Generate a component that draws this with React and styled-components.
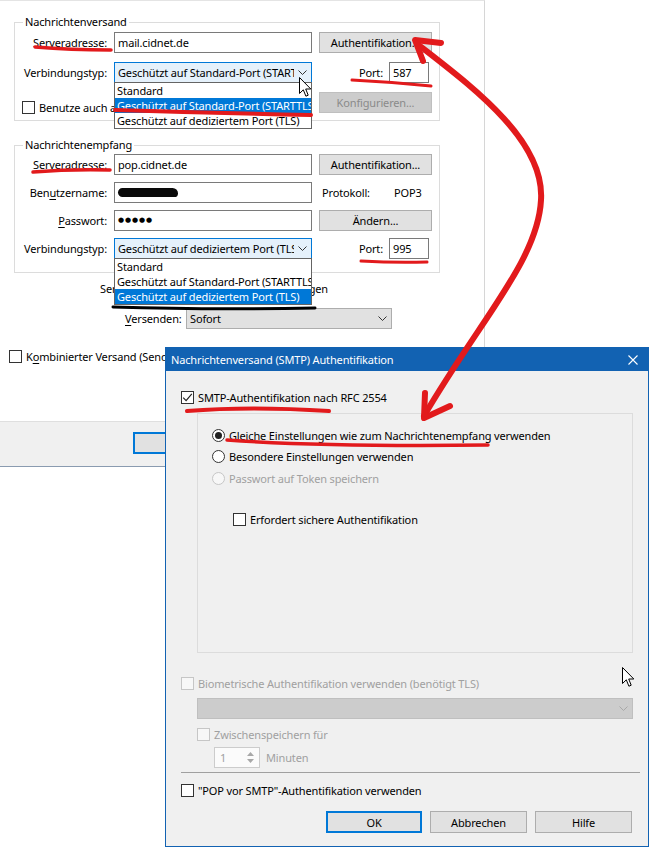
import React from "react";
import styled, { createGlobalStyle, css } from "styled-components";

const UI_FONT = `"Noto Sans", "Open Sans", "DejaVu Sans", sans-serif`;
const FS = 11;
const LS = "-0.15px";
const RED = "#e21a1c";
const ACCENT = "#0078d7";
const TITLE_BLUE = "#1262b2";
const GREY_TEXT = "#a0a0a0";

const GlobalStyle = createGlobalStyle`
  *, *::before, *::after { box-sizing: border-box; }
  html, body { margin: 0; padding: 0; background: #ffffff; }
  body { font-family: ${UI_FONT}; font-size: ${FS}px; letter-spacing: ${LS}; color: #000; }
`;

const Desktop = styled.main`
  position: relative;
  width: 650px;
  height: 850px;
  overflow: hidden;
  background: #ffffff;
`;

/* ---------------- shared controls ---------------- */
const TextBox = styled.div`
  align-self: center;
  height: 21px;
  display: flex;
  align-items: center;
  padding: 0 3px;
  background: #fff;
  border: 1px solid #7a7a7a;
  white-space: nowrap;
  overflow: hidden;
  ${(p) => p.$w && css`width: ${p.$w}px; flex: none;`}
`;

const WinButton = styled.button`
  align-self: end;
  font-family: inherit;
  font-size: inherit;
  letter-spacing: inherit;
  color: #000;
  height: ${(p) => p.$h || 21}px;
  width: ${(p) => (p.$w ? `${p.$w}px` : "100%")};
  flex: none;
  padding: 0 4px;
  background: #e1e1e1;
  border: 1px solid #adadad;
  border-radius: 0;
  white-space: nowrap;
  overflow: hidden;
  ${(p) => p.$disabled && css`background: #cccccc; border-color: #bfbfbf; color: #8a8a8a;`}
  ${(p) => p.$default && css`border: 2px solid ${ACCENT};`}
`;

const Combo = styled.div`
  position: relative;
  align-self: center;
  height: 21px;
  display: flex;
  align-items: center;
  padding-left: 3px;
  border: 1px solid #adadad;
  background: #e1e1e1;
  color: #000;
  ${(p) => p.$w && css`width: ${p.$w}px; flex: none;`}
  ${(p) => p.$open && css`border-color: ${ACCENT}; background: #e5f1fb;`}
  ${(p) => p.$disabled && css`background: #cccccc; border-color: #bfbfbf; color: #9a9a9a;`}
`;

const ComboValue = styled.span`
  flex: 1;
  min-width: 0;
  overflow: hidden;
  white-space: nowrap;
`;

const ComboArrow = styled.span`
  width: 17px;
  flex: none;
  display: flex;
  align-items: center;
  justify-content: center;
  color: ${(p) => (p.$disabled ? "#a8a8a8" : "#333")};
`;

const DropList = styled.ul`
  position: absolute;
  z-index: 20;
  top: 100%;
  left: -1px;
  right: -1px;
  margin: 0;
  padding: 0;
  list-style: none;
  background: #fff;
  border: 1px solid #646464;
`;

const DropItem = styled.li`
  height: 15px;
  line-height: 15px;
  padding-left: 2px;
  white-space: nowrap;
  overflow: hidden;
  ${(p) => p.$active && css`background: ${ACCENT}; color: #fff;`}
`;

const Chevron = () => (
  <svg width="9" height="5" viewBox="0 0 9 5">
    <path d="M0.5 0.5 L4.5 4.5 L8.5 0.5" fill="none" stroke="currentColor" strokeWidth="1" />
  </svg>
);

const CheckBox = styled.span`
  width: 13px;
  height: 13px;
  flex: none;
  display: inline-flex;
  align-items: center;
  justify-content: center;
  background: #fff;
  border: 1px solid #333;
  ${(p) => p.$disabled && css`background: #f7f7f7; border-color: #c6c6c6;`}
`;

const Check = ({ checked, disabled }) => (
  <CheckBox $disabled={disabled}>
    {checked && (
      <svg width="11" height="11" viewBox="0 0 11 11">
        <path d="M1.2 5.6 L4.1 8.6 L9.8 1.8" fill="none" stroke="#222" strokeWidth="1.2" />
      </svg>
    )}
  </CheckBox>
);

const RadioCircle = styled.span`
  width: 13px;
  height: 13px;
  flex: none;
  border-radius: 50%;
  display: inline-flex;
  align-items: center;
  justify-content: center;
  background: #fff;
  border: 1px solid #333;
  ${(p) => p.$disabled && css`background: #f7f7f7; border-color: #c6c6c6;`}
`;

const RadioDot = styled.span`
  width: 7px;
  height: 7px;
  border-radius: 50%;
  background: #222;
`;

const Radio = ({ checked, disabled }) => (
  <RadioCircle $disabled={disabled}>{checked && <RadioDot />}</RadioCircle>
);

const OptionRow = styled.div`
  display: flex;
  align-items: center;
  gap: 4px;
  height: 16px;
  white-space: nowrap;
  margin: ${(p) => p.$mt || 0}px 0 0 ${(p) => p.$ml || 0}px;
  color: ${(p) => (p.$disabled ? GREY_TEXT : "#000")};
`;

const Key = styled.u`
  text-decoration-thickness: 1px;
  text-underline-offset: 2px;
`;

/* ---------------- back window ---------------- */
const BackWindow = styled.section`
  position: absolute;
  left: 0;
  top: 0;
  width: 485px;
  height: 467px;
  display: flex;
  flex-direction: column;
  background: #fff;
  border-top: 1px solid #e4e4e4;
  border-right: 1px solid #d6d6d6;
  border-bottom: 1px solid #8a9bb0;
`;

const BackContent = styled.div`
  flex: 1;
  display: flex;
  flex-direction: column;
  padding-top: 13px;
`;

const BackFooter = styled.div`
  height: 45px;
  flex: none;
  background: #f0f0f0;
  border-top: 1px solid #dfdfdf;
  padding: 10px 0 0 133px;
`;

const Group = styled.fieldset`
  margin: ${(p) => p.$mt || 0}px 0 0 14px;
  width: 426px;
  min-width: 0;
  padding: ${(p) => p.$pt}px 7px ${(p) => p.$pb}px 8px;
  border: 1px solid #dcdcdc;
`;

const Legend = styled.legend`
  padding: 0 2px;
  height: 16px;
  line-height: 16px;
`;

const FormGrid = styled.div`
  display: grid;
  grid-template-columns: 84px 198px 113px;
  grid-auto-rows: 22px;
  column-gap: 7px;
  row-gap: ${(p) => p.$rowGap}px;
`;

const FieldLabel = styled.span`
  align-self: center;
  text-align: right;
  white-space: nowrap;
`;

const PortCell = styled.div`
  display: flex;
  align-items: center;
  justify-content: flex-end;
  gap: 6px;
  padding-right: 3px;
`;

const ProtoCell = styled.div`
  display: flex;
  align-items: center;
  padding-left: 3px;
`;

const ProtoLabel = styled.span`
  width: 72px;
`;

const SpanTwo = styled.div`
  grid-column: 1 / 3;
  align-self: end;
  margin: 0 0 -2px -1px;
`;

const Redaction = styled.span`
  display: block;
  width: 60px;
  height: 9px;
  background: #0a0a0a;
  border-radius: 5px 6px 4px 5px;
`;

const Dots = styled.span`
  font-family: "DejaVu Sans", sans-serif;
  font-size: 7px;
  letter-spacing: 0.9px;
`;

const SplitLine = styled.div`
  margin: 7px 0 0 100px;
  width: 228px;
  height: 16px;
  display: flex;
  align-items: center;
  justify-content: space-between;
  white-space: nowrap;
`;

const InlineRow = styled.div`
  display: flex;
  align-items: center;
  gap: 6px;
  margin: ${(p) => p.$mt || 0}px 0 0 ${(p) => p.$ml || 0}px;
  white-space: nowrap;
`;

const InlineLabel = styled.span`
  width: ${(p) => p.$w}px;
  text-align: right;
`;

/* ---------------- dialog ---------------- */
const Dialog = styled.section`
  position: absolute;
  z-index: 30;
  left: 165px;
  top: 347px;
  width: 484px;
  height: 500px;
  display: flex;
  flex-direction: column;
  background: #f0f0f0;
  border: 1px solid ${TITLE_BLUE};
`;

const TitleBar = styled.header`
  height: 23px;
  flex: none;
  display: flex;
  align-items: center;
  justify-content: space-between;
  padding-left: 5px;
  background: ${TITLE_BLUE};
  color: #fff;
`;

const CloseBox = styled.span`
  width: 30px;
  height: 23px;
  display: flex;
  align-items: center;
  justify-content: center;
`;

const DialogBody = styled.div`
  flex: 1;
  display: flex;
  flex-direction: column;
  padding: 0 8px 0 15px;
`;

const InnerBox = styled.div`
  margin: 8px 0 0 16px;
  width: 436px;
  height: 240px;
  flex: none;
  display: flex;
  flex-direction: column;
  padding: 13px 0 0 14px;
  border: 1px solid #dcdcdc;
`;

const SpinRow = styled.div`
  display: flex;
  align-items: center;
  gap: 6px;
  margin: 5px 0 0 33px;
  color: ${GREY_TEXT};
`;

const SpinBox = styled.div`
  width: 46px;
  height: 21px;
  display: flex;
  border: 1px solid #cccccc;
  background: #fbfbfb;
`;

const SpinValue = styled.span`
  flex: 1;
  padding-left: 5px;
  display: flex;
  align-items: center;
`;

const SpinButtons = styled.span`
  width: 17px;
  display: flex;
  flex-direction: column;
  justify-content: center;
  align-items: center;
  gap: 3px;
  color: #a8a8a8;
`;

const Separator = styled.hr`
  margin: 4px 0 0;
  height: 1px;
  border: none;
  background: #a0a0a0;
`;

const ButtonRow = styled.div`
  display: flex;
  justify-content: flex-end;
  gap: 8px;
  margin-top: 13px;
  padding-right: 8px;
`;

/* ---------------- overlays ---------------- */
const Overlay = styled.svg`
  position: absolute;
  left: 0;
  top: 0;
  z-index: 100;
  pointer-events: none;
`;

const CursorMark = styled.svg`
  position: absolute;
  z-index: 90;
  left: ${(p) => p.$x}px;
  top: ${(p) => p.$y}px;
  pointer-events: none;
`;

const Cursor = ({ x, y }) => (
  <CursorMark $x={x} $y={y} width="13" height="21" viewBox="0 0 13 21">
    <path
      d="M0.5 0.5 L0.5 16.5 L4.3 12.8 L6.9 19.2 L9.2 18.2 L6.7 12 L11.8 12 Z"
      fill="#fff"
      stroke="#000"
      strokeWidth="1"
      strokeLinejoin="round"
    />
  </CursorMark>
);

const Annotations = () => (
  <Overlay width="650" height="850" viewBox="0 0 650 850">
    <g stroke={RED} fill="none" strokeLinecap="round" strokeLinejoin="round">
      <path d="M35 47 Q70 50 111 50" strokeWidth="3.5" />
      <path d="M352 80 Q392 82 431 86" strokeWidth="3" />
      <path d="M115 110 Q210 113 311 115" strokeWidth="4" />
      <path d="M33 172 Q70 169 110 170" strokeWidth="3.5" />
      <path d="M361 261 Q395 263 427 262" strokeWidth="3" />
      <path d="M187 411 Q250 406 329 411" strokeWidth="4" />
      <path d="M227 440 Q330 447 488 445" strokeWidth="3.5" />
      <path d="M420 46 C470 85 545 140 541 200 C538 260 480 320 424 416" strokeWidth="6" />
      <path d="M441 43 L415 40 L423 61" strokeWidth="6" />
      <path d="M425 393 L424 418 L450 406" strokeWidth="6" />
    </g>
    <path d="M113 307 Q210 310 315 308" stroke="#000" strokeWidth="3" fill="none" strokeLinecap="round" />
  </Overlay>
);

const TYPES = [
  "Standard",
  "Geschützt auf Standard-Port (STARTTLS)",
  "Geschützt auf dediziertem Port (TLS)",
];

const TypeList = ({ active }) => (
  <DropList>
    {TYPES.map((t, i) => (
      <DropItem key={t} $active={i === active}>
        {t}
      </DropItem>
    ))}
  </DropList>
);

export default function App() {
  return (
    <>
      <GlobalStyle />
      <Desktop>
        <BackWindow>
          <BackContent>
            <Group $pt={1} $pb={7}>
              <Legend>Nachrichtenversand</Legend>
              <FormGrid $rowGap={8}>
                <FieldLabel>Serveradresse:</FieldLabel>
                <TextBox>mail.cidnet.de</TextBox>
                <WinButton>Authentifikation...</WinButton>

                <FieldLabel>Verbindungstyp:</FieldLabel>
                <Combo $open>
                  <ComboValue>Geschützt auf Standard-Port (STARTTLS)</ComboValue>
                  <ComboArrow>
                    <Chevron />
                  </ComboArrow>
                  <TypeList active={1} />
                </Combo>
                <PortCell>
                  <span>Port:</span>
                  <TextBox $w={40}>587</TextBox>
                </PortCell>

                <SpanTwo>
                  <OptionRow>
                    <Check />
                    Benutze auch als Standard-Server
                  </OptionRow>
                </SpanTwo>
                <WinButton $disabled>Konfigurieren...</WinButton>
              </FormGrid>
            </Group>

            <Group $mt={16} $pt={0} $pb={13}>
              <Legend>Nachrichtenempfang</Legend>
              <FormGrid $rowGap={6}>
                <FieldLabel>Serveradresse:</FieldLabel>
                <TextBox>pop.cidnet.de</TextBox>
                <WinButton>Authentifikation...</WinButton>

                <FieldLabel>
                  Ben<Key>u</Key>tzername:
                </FieldLabel>
                <TextBox>
                  <Redaction />
                </TextBox>
                <ProtoCell>
                  <ProtoLabel>Protokoll:</ProtoLabel>
                  <span>POP3</span>
                </ProtoCell>

                <FieldLabel>
                  <Key>P</Key>asswort:
                </FieldLabel>
                <TextBox>
                  <Dots>●●●●●</Dots>
                </TextBox>
                <WinButton>Ändern...</WinButton>

                <FieldLabel>Verbindungstyp:</FieldLabel>
                <Combo $open>
                  <ComboValue>Geschützt auf dediziertem Port (TLS)</ComboValue>
                  <ComboArrow>
                    <Chevron />
                  </ComboArrow>
                  <TypeList active={2} />
                </Combo>
                <PortCell>
                  <span>Port:</span>
                  <TextBox $w={40}>995</TextBox>
                </PortCell>
              </FormGrid>
            </Group>

            <SplitLine>
              <span>Servereinstellungen</span>
              <span>Empfangen</span>
            </SplitLine>

            <InlineRow $mt={12} $ml={125}>
              <InlineLabel $w={55}>
                <Key>V</Key>ersenden:
              </InlineLabel>
              <Combo $w={206}>
                <ComboValue>Sofort</ComboValue>
                <ComboArrow>
                  <Chevron />
                </ComboArrow>
              </Combo>
            </InlineRow>

            <OptionRow $mt={19} $ml={9}>
              <Check />
              <span>
                K<Key>o</Key>mbinierter Versand (Senden und Empfangen)
              </span>
            </OptionRow>
          </BackContent>
          <BackFooter>
            <WinButton $default $w={95} $h={22}>
              OK
            </WinButton>
          </BackFooter>
        </BackWindow>

        <Cursor x={299} y={77} />

        <Dialog>
          <TitleBar>
            <span>Nachrichtenversand (SMTP) Authentifikation</span>
            <CloseBox>
              <svg width="10" height="10" viewBox="0 0 10 10">
                <path d="M0.5 0.5 L9.5 9.5 M9.5 0.5 L0.5 9.5" stroke="#fff" strokeWidth="1.1" />
              </svg>
            </CloseBox>
          </TitleBar>
          <DialogBody>
            <OptionRow $mt={18}>
              <Check checked />
              SMTP-Authentifikation nach RFC 2554
            </OptionRow>

            <InnerBox>
              <OptionRow>
                <Radio checked />
                Gleiche Einstellungen wie zum Nachrichtenempfang verwenden
              </OptionRow>
              <OptionRow $mt={5}>
                <Radio />
                Besondere Einstellungen verwenden
              </OptionRow>
              <OptionRow $mt={6} $disabled>
                <Radio disabled />
                Passwort auf Token speichern
              </OptionRow>
              <OptionRow $mt={25} $ml={21}>
                <Check />
                Erfordert sichere Authentifikation
              </OptionRow>
            </InnerBox>

            <OptionRow $mt={22} $disabled>
              <Check disabled />
              Biometrische Authentifikation verwenden (benötigt TLS)
            </OptionRow>

            <InlineRow $mt={7} $ml={16}>
              <Combo $w={436} $disabled>
                <ComboValue />
                <ComboArrow $disabled>
                  <Chevron />
                </ComboArrow>
              </Combo>
            </InlineRow>

            <OptionRow $mt={7} $ml={16} $disabled>
              <Check disabled />
              Zwischenspeichern für
            </OptionRow>

            <SpinRow>
              <SpinBox>
                <SpinValue>1</SpinValue>
                <SpinButtons>
                  <svg width="7" height="4" viewBox="0 0 7 4">
                    <path d="M0 4 L3.5 0 L7 4 Z" fill="currentColor" />
                  </svg>
                  <svg width="7" height="4" viewBox="0 0 7 4">
                    <path d="M0 0 L3.5 4 L7 0 Z" fill="currentColor" />
                  </svg>
                </SpinButtons>
              </SpinBox>
              <span>Minuten</span>
            </SpinRow>

            <Separator />

            <OptionRow $mt={9}>
              <Check />
              "POP vor SMTP"-Authentifikation verwenden
            </OptionRow>

            <ButtonRow>
              <WinButton $default $w={96} $h={22}>
                OK
              </WinButton>
              <WinButton $w={97} $h={22}>
                Abbrechen
              </WinButton>
              <WinButton $w={97} $h={22}>
                Hilfe
              </WinButton>
            </ButtonRow>
          </DialogBody>
        </Dialog>

        <Cursor x={622} y={667} />
        <Annotations />
      </Desktop>
    </>
  );
}
